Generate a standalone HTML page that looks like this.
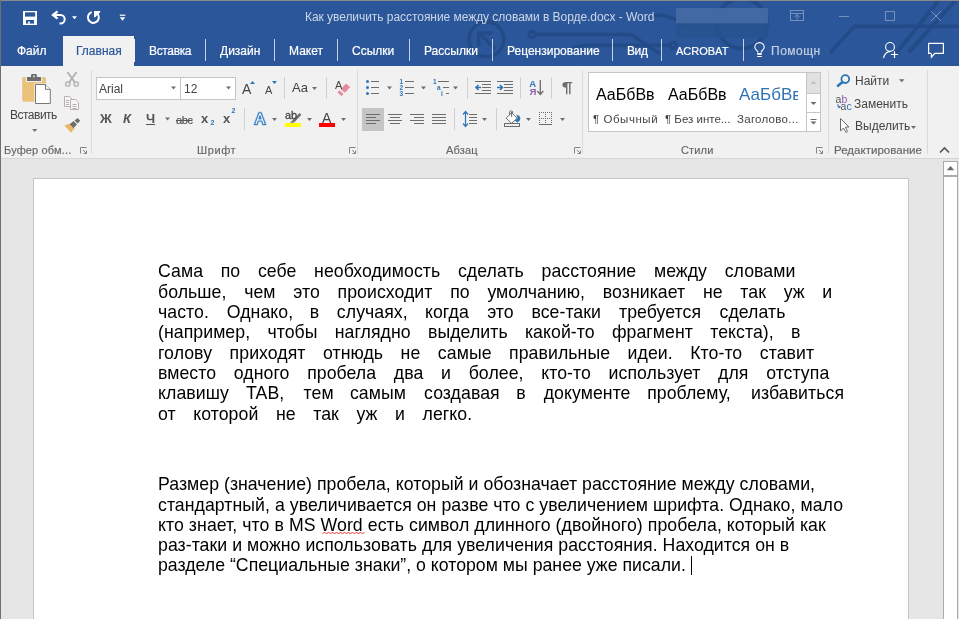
<!DOCTYPE html>
<html><head><meta charset="utf-8">
<style>
*{margin:0;padding:0;box-sizing:border-box}
html,body{width:959px;height:619px;overflow:hidden;background:#e6e6e6;font-family:"Liberation Sans",sans-serif}
.a{position:absolute;white-space:pre}
#win{position:absolute;left:0;top:0;width:959px;height:619px;overflow:hidden;will-change:transform}
#title{position:absolute;left:0;top:0;width:959px;height:66px;background:#2b579a}
#ribbon{position:absolute;left:0;top:66px;width:959px;height:93px;background:#f1f1f1;border-bottom:1px solid #d6d6d6}
.tab{position:absolute;top:44px;font-size:12px;color:#fff;line-height:14px;white-space:pre;-webkit-text-stroke:0.2px currentColor}
.tsep{position:absolute;top:39px;width:1px;height:22px;background:#c5d2e6}
.gsep{position:absolute;top:70px;width:1px;height:84px;background:#dadada}
.isep{position:absolute;width:1px;height:22px;background:#d4d4d4}
.glbl{position:absolute;top:143px;font-size:11px;color:#666;line-height:13px;white-space:pre;-webkit-text-stroke:0.15px #666;letter-spacing:0.15px}
.txt{position:absolute;font-size:12px;color:#444;line-height:14px;white-space:pre}
.dd{position:absolute;width:0;height:0;border-left:2.5px solid transparent;border-right:2.5px solid transparent;border-top:3px solid #777}
.doc{position:absolute;left:158px;font-size:17.7px;color:#000;line-height:20px;white-space:pre;will-change:transform}

</style></head><body>
<div id="win">
<div id="title"></div>
<svg class="a" style="left:0;top:0" width="959" height="65" viewBox="0 0 959 65">
 <g fill="none" stroke="#234b88" stroke-width="3.5">
  <circle cx="486.4" cy="39.3" r="17.5"/>
  <path d="M479 33 L495 49"/>
  <path d="M535.5 34.6 H631 L662 55"/>
  <path d="M572 49 Q578 45.3 590 45.3 H669.5"/>
  <circle cx="673.4" cy="45.3" r="3"/>
  <circle cx="532" cy="34.6" r="3"/>
  <path d="M653 15 Q672 14 690 28"/>
  <circle cx="741.8" cy="23.4" r="25" stroke-width="4"/>
  <path d="M830 53 L854.5 26.3 H959"/>
  <path d="M896.2 52.7 L939.3 0" stroke-width="4"/>
  <path d="M908.6 52.7 L955.9 0" stroke-width="4"/>
 </g>
 <path d="M478.7 46.5 V33 H492.5" fill="none" stroke="#234b88" stroke-width="3.6"/>
 <!-- blurred username -->
 <rect x="676" y="8" width="92" height="15.5" fill="#4a6ea8" opacity="0.8"/>
 <rect x="676" y="23.5" width="92" height="14.5" fill="#27528f" opacity="0.8"/>
 <!-- save -->
 <rect x="23" y="11" width="14" height="14" fill="#fff"/>
 <rect x="25" y="12.3" width="10.2" height="4.3" fill="#2b579a"/>
 <rect x="26" y="20" width="8" height="3.6" fill="#2b579a"/>
 <rect x="28" y="21.6" width="2" height="2" fill="#fff"/>
 <!-- undo -->
 <g fill="none" stroke="#fff" stroke-width="2">
  <path d="M57.5 11.3 L53 15 L57.5 18.7" stroke-width="2.3"/>
  <path d="M53 15 H60.5 A4.2 4.2 0 0 1 60.5 23.4 H59.5"/>
 </g>
 <path d="M72 16.3 h5 l-2.5 3z" fill="#fff"/>
 <!-- redo -->
 <path d="M91.8 12.1 A5.5 5.5 0 1 0 97.4 13.6" fill="none" stroke="#fff" stroke-width="2"/>
 <path d="M94 11 H100.3 V12 L95.2 17.2 H94 Z" fill="#fff"/>
 <!-- customize -->
 <rect x="119.8" y="14.6" width="5.5" height="1.2" fill="#fff"/>
 <path d="M119.8 17.2 h5.5 l-2.75 3.6z" fill="#fff"/>
 <!-- window controls -->
 <g fill="none" stroke="#7690bd" stroke-width="1">
  <rect x="790.5" y="10.5" width="13" height="10"/>
  <path d="M790.5 13.5 H803.5"/>
  <path d="M797 19.5 V15 M794.5 17 L797 14.5 L799.5 17"/>
  <path d="M839 16.5 H849"/>
  <rect x="885.5" y="11.5" width="9" height="9"/>
  <path d="M931 11 L941 21 M941 11 L931 21"/>
 </g>
 <!-- person -->
 <g fill="none" stroke="#fff" stroke-width="1.1">
  <circle cx="890" cy="46.9" r="4.4"/>
  <path d="M890.5 51.4 Q885 51.8 883.5 58"/>
 </g>
 <path d="M891 54.5 H898 M894.5 51.2 V58" stroke="#fff" stroke-width="1.2"/>
 <!-- comment -->
 <path d="M931 53.4 H928.6 V43.4 H943.4 V53.4 H934.8 L931.4 57.2 V53.4" fill="none" stroke="#fff" stroke-width="1.2"/>
 <!-- bulb -->
 <path d="M757.7 52.5 V51.5 Q754.8 49 754.8 47.3 A4.7 4.7 0 1 1 764.2 47.3 Q764.2 49 761.3 51.5 V52.5" fill="none" stroke="#fff" stroke-width="1.1"/>
 <rect x="757.2" y="53" width="4.6" height="1.8" fill="#fff"/>
 <rect x="757.2" y="56" width="4.6" height="1" fill="#fff"/>
</svg>
<div class="a" style="left:305px;top:10px;font-size:12px;color:#ccd6e7;line-height:14px;letter-spacing:-0.05px">Как увеличить расстояние между словами в Ворде.docx - Word</div>
<div class="a" style="left:63px;top:36px;width:71px;height:30px;background:#f1f1f1"></div>
<div class="a" style="left:134px;top:39px;width:1px;height:23px;background:#f1f1f1"></div>
<div class="tab" style="left:17px">Файл</div>
<div class="tab" style="left:76px;color:#2b579a">Главная</div>
<div class="tab" style="left:149px;letter-spacing:-0.35px">Вставка</div>
<div class="tsep" style="left:205px"></div>
<div class="tab" style="left:220px">Дизайн</div>
<div class="tsep" style="left:274px"></div>
<div class="tab" style="left:289px">Макет</div>
<div class="tsep" style="left:337px"></div>
<div class="tab" style="left:352px">Ссылки</div>
<div class="tsep" style="left:409px"></div>
<div class="tab" style="left:424px">Рассылки</div>
<div class="tsep" style="left:492px"></div>
<div class="tab" style="left:507px">Рецензирование</div>
<div class="tsep" style="left:612px"></div>
<div class="tab" style="left:627px;letter-spacing:-0.4px">Вид</div>
<div class="tsep" style="left:661px"></div>
<div class="tab" style="left:676px;font-size:11px">ACROBAT</div>
<div class="tsep" style="left:743px"></div>
<div class="tab" style="left:771px;color:#c3cfe3;letter-spacing:0.5px">Помощн</div>

<div id="ribbon"></div>
<!--RIB-->
<svg class="a" style="left:0;top:0" width="959" height="160" viewBox="0 0 959 160">
 <!-- separators -->
 <g fill="#dadada">
  <rect x="91" y="70" width="1" height="84"/>
  <rect x="357" y="70" width="1" height="84"/>
  <rect x="582" y="70" width="1" height="84"/>
  <rect x="828" y="70" width="1" height="84"/>
  <rect x="927" y="70" width="1" height="84"/>
 </g>
 <g fill="#d0d0d0">
  <rect x="284" y="77" width="1" height="22"/>
  <rect x="326" y="77" width="1" height="22"/>
  <rect x="244" y="108" width="1" height="22"/>
  <rect x="467" y="77" width="1" height="22"/>
  <rect x="520" y="77" width="1" height="22"/>
  <rect x="551" y="77" width="1" height="22"/>
  <rect x="454" y="108" width="1" height="22"/>
  <rect x="496" y="108" width="1" height="22"/>
 </g>
 <!-- paste clipboard -->
 <rect x="22.2" y="77" width="23.7" height="24.7" rx="1.6" fill="#eac27a"/>
 <rect x="25.8" y="75.8" width="16.4" height="6.2" fill="#f1f1f1"/>
 <rect x="27" y="77" width="14" height="4" fill="#6d6d6d"/>
 <rect x="31" y="74" width="5.8" height="4" rx="1.2" fill="#6d6d6d"/>
 <rect x="33.2" y="75.6" width="1.6" height="1.6" fill="#f1f1f1"/>
 <rect x="34.3" y="83.4" width="17" height="21.2" fill="#f1f1f1"/>
 <path d="M35.5 84.5 H45.5 L50.3 89.3 V103.5 H35.5 Z" fill="#fff" stroke="#787878" stroke-width="1"/>
 <path d="M45.5 84.5 V89.3 H50.3" fill="#fff" stroke="#787878" stroke-width="1"/>
 <path d="M32 129 h5.5 l-2.75 3z" fill="#777"/>
 <!-- scissors disabled -->
 <g fill="none" stroke="#b0b0b0">
  <circle cx="67.8" cy="84" r="2.2" stroke-width="1.3"/>
  <circle cx="76.2" cy="84" r="2.2" stroke-width="1.3"/>
  <path d="M69.3 82.2 L76.5 72 M74.7 82.2 L67.5 72" stroke-width="1.8"/>
 </g>
 <!-- copy disabled -->
 <g fill="#f6f4f6" stroke="#b4b0b4" stroke-width="1">
  <path d="M64.5 96.5 H69.5 L72.5 99.5 V106.5 H64.5 Z"/>
  <path d="M70.5 99.5 H75.5 L78.5 102.5 V109.5 H70.5 Z"/>
 </g>
 <g stroke="#b4b0b4" stroke-width="1"><path d="M66 100.5h3 M66 102.5h3 M66 104.5h3 M72.5 104.5h4 M72.5 106.5h4 M72.5 108.5h4"/></g>
 <!-- format painter -->
 <path d="M64.3 125.6 L70.3 123.4 L74.8 128 L71 132.7 Z" fill="#e8b96a"/>
 <path d="M69.8 124.3 L73.6 121 L77 124.6 L73.4 128 Z" fill="#6d6d6d"/>
 <path d="M74.6 120.6 L77.6 118 L80.2 120.7 L77.6 123.4 Z" fill="#6d6d6d"/>
 <!-- launchers -->
 <g fill="none" stroke="#858585" stroke-width="1">
  <path d="M80.5 153.5 V147.5 H86.5"/><path d="M83 150 L86 153 M86.5 150.5 V153.5 H83.5"/>
  <path d="M349.5 153.5 V147.5 H355.5"/><path d="M352 150 L355 153 M355.5 150.5 V153.5 H352.5"/>
  <path d="M574.5 153.5 V147.5 H580.5"/><path d="M577 150 L580 153 M580.5 150.5 V153.5 H577.5"/>
  <path d="M816.5 153.5 V147.5 H822.5"/><path d="M819 150 L822 153 M822.5 150.5 V153.5 H819.5"/>
 </g>
 <!-- font boxes -->
 <rect x="96.5" y="77.5" width="84" height="22" fill="#fff" stroke="#c6c6c6"/>
 <rect x="180.5" y="77.5" width="55" height="22" fill="#fff" stroke="#c6c6c6"/>
 <g fill="#6d6d6d">
  <path d="M171 86.5 h5 l-2.5 3z"/>
  <path d="M226 86.5 h5 l-2.5 3z"/>
 </g>
 <!-- grow/shrink -->
 <path d="M250 84 L252.5 81 L255 84Z" fill="#2e75b6"/>
 <path d="M272 81 L277 81 L274.5 84Z" fill="#2e75b6"/>
 <!-- dropdown arrows -->
 <g fill="#6d6d6d">
  <path d="M312 87 h5 l-2.5 3z"/>
  <path d="M165 117.5 h5 l-2.5 3z"/>
  <path d="M272 118 h5 l-2.5 3z"/>
  <path d="M307 118 h5 l-2.5 3z"/>
  <path d="M341 118 h5 l-2.5 3z"/>
  <path d="M387 86.5 h5 l-2.5 3z"/>
  <path d="M421 86.5 h5 l-2.5 3z"/>
  <path d="M453 86.5 h5 l-2.5 3z"/>
  <path d="M482 118 h5 l-2.5 3z"/>
  <path d="M526 118 h5 l-2.5 3z"/>
  <path d="M560 118 h5 l-2.5 3z"/>
  <path d="M899 79.2 h5.5 l-2.75 3z"/>
  <path d="M911 126 h5 l-2.5 3z"/>
 </g>
 <!-- clear formatting eraser -->
 <path d="M340.4 89.3 L346 83 L350.6 87 L345 93.3 Z" fill="#e58a9a" stroke="#f1f1f1" stroke-width="0.9"/>
 <path d="M337 92.6 L339.4 89.9 L344 93.9 L341.6 96.6 Z" fill="#e58a9a" stroke="#f1f1f1" stroke-width="0.9"/>
 <!-- highlight & font color bars -->
 <rect x="285" y="123" width="16" height="4" fill="#ffff00"/>
 <rect x="319" y="123" width="16" height="4" fill="#ff0000"/>
 <path d="M292.3 120.6 L299.6 113 L301.4 114.8 L294.1 122.4 Z" fill="#6d6d6d"/>
 <path d="M290 123 L292.3 120.6 L294.1 122.4 Z" fill="#6d6d6d"/>
</svg>
<!--/RIB-->
<!--RIB2-->
<svg class="a" style="left:0;top:0" width="959" height="160" viewBox="0 0 959 160">
 <!-- bullets -->
 <g fill="#2e75b6">
  <circle cx="367.5" cy="81.5" r="1.5"/><circle cx="367.5" cy="87.5" r="1.5"/><circle cx="367.5" cy="93.5" r="1.5"/>
 </g>
 <g fill="#6d6d6d">
  <rect x="371" y="81" width="8" height="1"/><rect x="371" y="87" width="8" height="1"/><rect x="371" y="93" width="8" height="1"/>
  <rect x="405" y="81" width="9" height="1"/><rect x="405" y="87" width="9" height="1"/><rect x="405" y="93" width="9" height="1"/>
  <rect x="438" y="81" width="11" height="1"/><rect x="443" y="87" width="6" height="1"/><rect x="446" y="93" width="3" height="1"/>
 </g>
 <g fill="#2e75b6" font-family="Liberation Sans" font-weight="bold" font-size="6.5">
  <text x="399.5" y="84">1</text><text x="399.5" y="90">2</text><text x="399.5" y="96">3</text>
  <text x="433" y="84">1</text><text x="437" y="90">a</text><text x="441" y="96">i</text>
 </g>
 <!-- align buttons -->
 <rect x="362" y="108" width="22" height="23" fill="#c5c5c5"/>
 <g fill="#6d6d6d">
  <rect x="366" y="114" width="14" height="1"/><rect x="366" y="117" width="10" height="1"/><rect x="366" y="120" width="14" height="1"/><rect x="366" y="123" width="10" height="1"/>
  <rect x="388" y="114" width="14" height="1"/><rect x="390" y="117" width="10" height="1"/><rect x="388" y="120" width="14" height="1"/><rect x="390" y="123" width="10" height="1"/>
  <rect x="410" y="114" width="14" height="1"/><rect x="414" y="117" width="10" height="1"/><rect x="410" y="120" width="14" height="1"/><rect x="414" y="123" width="10" height="1"/>
  <rect x="432" y="114" width="14" height="1"/><rect x="432" y="117" width="14" height="1"/><rect x="432" y="120" width="14" height="1"/><rect x="432" y="123" width="14" height="1"/>
 </g>
 <!-- line spacing -->
 <g fill="#6d6d6d">
  <rect x="469" y="114" width="8" height="1"/><rect x="469" y="117" width="8" height="1"/><rect x="469" y="120" width="8" height="1"/><rect x="469" y="123" width="8" height="1"/>
 </g>
 <g fill="none" stroke="#2e75b6" stroke-width="1.2">
  <path d="M465.5 112 V126 M463 114.5 L465.5 111.5 L468 114.5 M463 123.5 L465.5 126.5 L468 123.5"/>
 </g>
 <!-- indent -->
 <g fill="#6d6d6d">
  <rect x="475" y="81" width="16" height="1"/><rect x="482" y="84" width="9" height="1"/><rect x="482" y="87" width="9" height="1"/><rect x="482" y="90" width="9" height="1"/><rect x="475" y="93" width="16" height="1"/>
  <rect x="497" y="81" width="16" height="1"/><rect x="504" y="84" width="9" height="1"/><rect x="504" y="87" width="9" height="1"/><rect x="504" y="90" width="9" height="1"/><rect x="497" y="93" width="16" height="1"/>
 </g>
 <g fill="none" stroke="#2e75b6" stroke-width="1.6">
  <path d="M475.5 87.5 H481 M478.5 85 L476 87.5 L478.5 90"/>
  <path d="M497 87.5 H502.5 M500 85 L502.5 87.5 L500 90"/>
 </g>
 <!-- sort -->
 <text x="529.3" y="87.3" font-family="Liberation Sans" font-weight="bold" font-size="9.6" fill="#2e75b6">A</text>
 <text x="529.6" y="95.3" font-family="Liberation Sans" font-weight="bold" font-size="9.6" fill="#8e5cb5">Я</text>
 <g fill="none" stroke="#6d6d6d" stroke-width="1.3"><path d="M540.3 80 V94 M537.3 91 L540.3 94.5 L543.3 91"/></g>
 <!-- pilcrow -->
 <path d="M566 82 H572.2 V83.3 H570.5 V94.2 H569.1 V83.3 H567.4 V94.2 H566 V87.6 A3.6 2.8 0 0 1 566 82 Z" fill="#6d6d6d"/>
 <!-- shading -->
 <path d="M516.3 114.6 Q520.6 115.6 520.3 119 Q520 121.6 517.3 122.4 L514.8 120.4 L517.6 117.8 Z" fill="#2e75b6"/>
 <g fill="none" stroke="#6d6d6d" stroke-width="1">
  <path d="M506.2 118.2 L511.5 112.6 L517.2 118.2 L511.5 123.3 Z" fill="#fff"/>
  <path d="M509.6 115.2 V112 Q509.6 111 510.6 111 H511.6 Q512.6 111 512.6 112 V113.6"/>
  <path d="M511.6 112 V117"/>
  <rect x="504.5" y="123.5" width="15" height="3"/>
 </g>
 <!-- borders -->
 <g fill="#6d6d6d">
  <path d="M539 112h1v1h-1z M541 112h1v1h-1z M543 112h1v1h-1z M545 112h1v1h-1z M547 112h1v1h-1z M549 112h1v1h-1z M551 112h1v1h-1z
   M539 114h1v1h-1z M539 116h1v1h-1z M539 118h1v1h-1z M539 120h1v1h-1z M539 122h1v1h-1z
   M551 114h1v1h-1z M551 116h1v1h-1z M551 118h1v1h-1z M551 120h1v1h-1z M551 122h1v1h-1z
   M545 114h1v1h-1z M545 116h1v1h-1z M545 120h1v1h-1z M545 122h1v1h-1z
   M541 118h1v1h-1z M543 118h1v1h-1z M545 118h1v1h-1z M547 118h1v1h-1z M549 118h1v1h-1z"/>
  <rect x="539" y="124" width="13" height="1"/>
 </g>
 <!-- styles gallery -->
 <rect x="588.5" y="72.5" width="232" height="59" fill="#fff" stroke="#c6c6c6"/>
 <rect x="806.5" y="72.5" width="14" height="59" fill="#fff" stroke="#c6c6c6"/>
 <rect x="807" y="73" width="13" height="20" fill="#e1e1e1"/>
 <path d="M806.5 93.5 H820.5 M806.5 112.5 H820.5" stroke="#c6c6c6"/>
 <path d="M810.5 84 L813.5 81 L816.5 84 Z" fill="#c0c0c0"/>
 <path d="M810.5 102 L813.5 105 L816.5 102 Z" fill="#6d6d6d"/>
 <path d="M810.5 119.5 H816.5" stroke="#6d6d6d"/>
 <path d="M810.5 121.5 L813.5 124.5 L816.5 121.5 Z" fill="#6d6d6d"/>
 <!-- find -->
 <g fill="none" stroke="#2e75b6">
  <circle cx="845.3" cy="79.1" r="3.9" stroke-width="1.8"/>
  <path d="M842.3 82.3 L838 85.8" stroke-width="2.6" stroke-linecap="round"/>
 </g>
 <!-- replace -->
 <text x="835.6" y="103" font-family="Liberation Sans" font-size="10.5" fill="#555">a</text>
 <text x="841.6" y="103" font-family="Liberation Sans" font-size="10.5" fill="#8e5cb5">b</text>
 <text x="840.6" y="110.3" font-family="Liberation Sans" font-size="10.5" fill="#555">a</text>
 <text x="846.6" y="110.3" font-family="Liberation Sans" font-size="10.5" fill="#2e75b6">c</text>
 <path d="M838 104 V107 H840.2 M838.8 106 L840.4 107 L838.8 108" fill="none" stroke="#2e75b6" stroke-width="1"/>
 <!-- select cursor -->
 <path d="M840.5 118.5 V131 L843.5 128 L846 132.5 L847.5 131.5 L845.5 127 H849 Z" fill="#fff" stroke="#6d6d6d" stroke-width="1"/>
 <!-- collapse chevron -->
 <path d="M940 152.5 L944.5 148 L949 152.5" fill="none" stroke="#555" stroke-width="1.6"/>
</svg>
<!--/RIB2-->
<!--RTXT-->
<div class="txt" style="left:10px;top:108px;letter-spacing:-0.5px">Вставить</div>
<div class="glbl" style="left:4px;top:144px">Буфер обм...</div>
<div class="glbl" style="left:197px;top:144px;letter-spacing:0.6px">Шрифт</div>
<div class="glbl" style="left:446px;top:144px">Абзац</div>
<div class="glbl" style="left:681px;top:144px">Стили</div>
<div class="glbl" style="left:834px;top:144px;font-size:11.5px;letter-spacing:0.02px">Редактирование</div>
<div class="txt" style="left:99px;top:82px">Arial</div>
<div class="txt" style="left:184px;top:82px">12</div>
<div class="txt" style="left:100px;top:112px;font-weight:bold;font-size:13px;color:#555">Ж</div>
<div class="txt" style="left:123px;top:112px;font-weight:bold;font-style:italic;font-size:13px;color:#555">К</div>
<div class="txt" style="left:146px;top:112px;font-weight:bold;font-size:13px;text-decoration:underline;color:#555">Ч</div>
<div class="txt" style="left:176px;top:113px;font-size:11px;text-decoration:line-through;color:#555;letter-spacing:-0.4px;-webkit-text-stroke:0.2px #555">abc</div>
<div class="txt" style="left:201px;top:112px;font-weight:bold;font-size:13px;color:#555">x</div>
<div class="txt" style="left:210.5px;top:116px;font-size:7px;color:#2e75b6;font-weight:bold">2</div>
<div class="txt" style="left:223px;top:112px;font-weight:bold;font-size:13px;color:#555">x</div>
<div class="txt" style="left:231.5px;top:104px;font-size:7px;color:#2e75b6;font-weight:bold">2</div>
<div class="txt" style="left:242px;top:81px;font-size:14px;line-height:16px">A</div>
<div class="txt" style="left:265px;top:84px;font-size:11px;line-height:13px">A</div>
<div class="txt" style="left:292px;top:80px;font-size:13px;line-height:15px">Aa</div>
<div class="txt" style="left:335px;top:79px;font-size:11px;line-height:13px">A</div>
<svg class="a" style="left:250px;top:108px" width="20" height="20" viewBox="250 108 20 20">
 <path d="M254.5 124.5 L259 112.8 H261 L265.5 124.5 H263 L261.8 121 H258.2 L257 124.5 Z M258.9 119 H261.1 L260 115.8 Z" fill="#fff" stroke="#bcd5ee" stroke-width="2.6" stroke-linejoin="round"/>
 <path d="M254.5 124.5 L259 112.8 H261 L265.5 124.5 H263 L261.8 121 H258.2 L257 124.5 Z M258.9 119 H261.1 L260 115.8 Z" fill="#fff" stroke="#3a7cc0" stroke-width="1.1" stroke-linejoin="round"/>
</svg>
<div class="txt" style="left:285px;top:109px;font-size:11px;line-height:12px;-webkit-text-stroke:0.3px #444">ab</div>
<div class="txt" style="left:322px;top:110px;font-size:14px;line-height:16px">A</div>
<div class="txt" style="left:596px;top:86px;font-size:16px;line-height:18px;color:#000">АаБбВв</div>
<div class="txt" style="left:668px;top:86px;font-size:16px;line-height:18px;color:#000">АаБбВв</div>
<div style="position:absolute;left:739px;top:86px;width:59px;overflow:hidden"><div class="txt" style="position:static;font-size:17px;line-height:18px;color:#2e74b5">АаБбВв</div></div>
<div class="txt" style="left:593px;top:112px;font-size:11.5px;letter-spacing:0.55px">¶ Обычный</div>
<div class="txt" style="left:665px;top:112px;font-size:11.5px">¶ Без инте...</div>
<div class="txt" style="left:737px;top:112px;font-size:11.5px;letter-spacing:0.27px">Заголово...</div>
<div class="txt" style="left:855px;top:74px">Найти</div>
<div class="txt" style="left:854px;top:97px">Заменить</div>
<div class="txt" style="left:855px;top:119px">Выделить</div>
<!--/RTXT-->


<!-- window border -->
<div class="a" style="left:0;top:0;width:959px;height:1px;background:#8a8a8a"></div>
<div class="a" style="left:0;top:0;width:1px;height:619px;background:#707070"></div>

<!-- page -->
<div class="a" style="left:33px;top:178px;width:876px;height:460px;background:#fff;border:1px solid #c6c6c6"></div>

<!--DOC-->
<div class="doc" style="top:261px;word-spacing:12.686px;letter-spacing:0.060px">Сама по себе необходимость сделать расстояние между словами</div>
<div class="doc" style="top:282px;word-spacing:12.720px;letter-spacing:0.060px">больше, чем это происходит по умолчанию, возникает не так уж и</div>
<div class="doc" style="top:302px;word-spacing:12.875px;letter-spacing:0.060px">часто. Однако, <span style="position:relative;left:-1.2px">в</span> <span style="position:relative;left:-1.5px">случаях,</span> <span style="position:relative;left:-2.2px">когда</span> <span style="position:relative;left:-1.7px">это</span> <span style="position:relative;left:-1.9px">все-таки</span> <span style="position:relative;left:-1.7px">требуется</span> <span style="position:relative;left:-1.2px">сделать</span></div>
<div class="doc" style="top:322px;word-spacing:12.286px;letter-spacing:0.060px">(например, чтобы наглядно выделить какой-то фрагмент текста), в</div>
<div class="doc" style="top:343px;word-spacing:12.550px;letter-spacing:0.060px">голову приходят отнюдь не самые правильные идеи. Кто-то ставит</div>
<div class="doc" style="top:363px;word-spacing:12.711px;letter-spacing:0.060px">вместо одного пробела два и более, кто-то использует для отступа</div>
<div class="doc" style="top:383px;word-spacing:12.950px;letter-spacing:0.060px">клавишу <span style="position:relative;left:-0.7px">TAB,</span> <span style="position:relative;left:0.6px">тем</span> <span style="position:relative;left:-1.1px">самым</span> <span style="position:relative;left:-0.9px">создавая</span> <span style="position:relative;left:-2.3px">в</span> <span style="position:relative;left:-2.2px">документе</span> <span style="position:relative;left:-3.5px">проблему,</span> <span style="position:relative;left:-1.2px">избавиться</span></div>
<div class="doc" style="top:404px;word-spacing:12.600px;letter-spacing:0.060px">от которой не так уж и легко.</div>
<div class="doc" style="top:474px;letter-spacing:0.039px">Размер (значение) пробела, который и обозначает расстояние между словами,</div>
<div class="doc" style="top:495px;letter-spacing:0.056px">стандартный, а увеличивается он разве что с увеличением шрифта. Однако, мало</div>
<div class="doc" style="top:515px;letter-spacing:0.070px">кто знает, что в MS Word есть символ длинного (двойного) пробела, который как</div>
<div class="doc" style="top:535px;letter-spacing:0.043px">раз-таки и можно использовать для увеличения расстояния. Находится он в</div>
<div class="doc" style="top:555px;letter-spacing:0.016px">разделе “Специальные знаки”, о котором мы ранее уже писали.</div>
<!--/DOC-->
<div class="a" style="left:691px;top:556px;width:1px;height:19px;background:#000"></div>
<svg class="a" style="left:0;top:0" width="959" height="619"><polyline points="322.5,534.0 324.5,532.0 326.5,534.0 328.5,532.0 330.5,534.0 332.5,532.0 334.5,534.0 336.5,532.0 338.5,534.0 340.5,532.0 342.5,534.0 344.5,532.0 346.5,534.0 348.5,532.0 350.5,534.0 352.5,532.0 354.5,534.0 356.5,532.0 358.5,534.0 360.5,532.0 362.5,534.0 364.5,532.0" fill="none" stroke="#e8241c" stroke-width="0.9"/></svg>
<!-- scrollbar -->
<div class="a" style="left:943px;top:161px;width:15px;height:470px;background:#fff;border:1px solid #ababab"></div>
<div class="a" style="left:943px;top:175px;width:15px;height:2px;background:#ababab"></div>
<svg class="a" style="left:940px;top:160px" width="19" height="20" viewBox="940 160 19 20"><path d="M946.8 170.2 L950.5 166 L954.2 170.2 Z" fill="#6a6a6a"/></svg>
</div>
</body></html>
